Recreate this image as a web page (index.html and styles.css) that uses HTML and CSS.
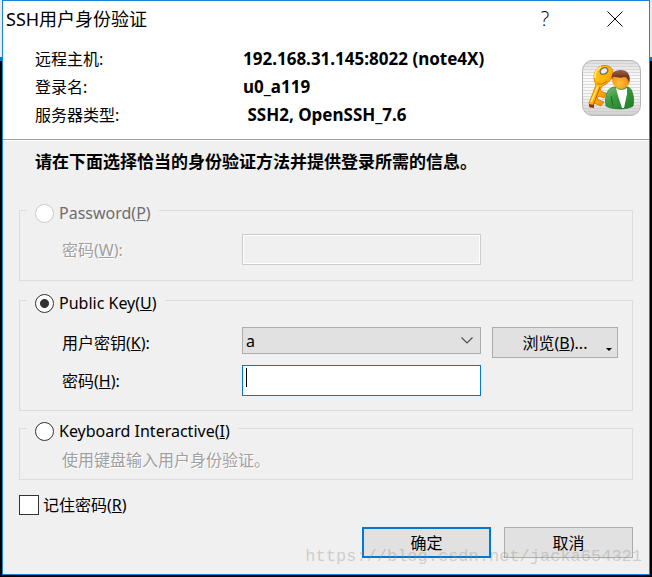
FILE: index.html
```html
<!DOCTYPE html>
<html lang="zh-CN">
<head>
    <meta charset="UTF-8">
    <meta name="viewport" content="width=device-width, initial-scale=1.0">
    <title>SSH用户身份验证</title>
    <link rel="stylesheet" href="styles.css">
</head>
<body>
    <form class="dialog">
        <header class="titlebar">
            <h1>SSH用户身份验证</h1>
            <button type="button" class="title-button help" aria-label="帮助">?</button>
            <button type="button" class="title-button" aria-label="关闭">
                <svg width="16" height="16" viewBox="0 0 16 16"><path d="M.5 .5l15 15M15.5 .5l-15 15" stroke="#000" fill="none"/></svg>
            </button>
        </header>

        <section class="host">
            <dl>
                <dt>远程主机:</dt>
                <dd>192.168.31.145:8022 (note4X)</dd>
                <dt>登录名:</dt>
                <dd>u0_a119</dd>
                <dt>服务器类型:</dt>
                <dd>&nbsp;SSH2, OpenSSH_7.6</dd>
            </dl>
            <svg class="user-icon" width="59" height="57" viewBox="0 0 59 57" aria-hidden="true">
                <defs>
                    <linearGradient id="tile" x1="0" y1="0" x2="0" y2="1">
                        <stop offset="0" stop-color="#dcdcdc"/>
                        <stop offset=".3" stop-color="#fafafa"/>
                        <stop offset=".65" stop-color="#f6f6f6"/>
                        <stop offset="1" stop-color="#cfcfcf"/>
                    </linearGradient>
                    <pattern id="lines" width="3" height="3" patternUnits="userSpaceOnUse">
                        <path d="M0 .5h3" stroke="#c8c8c8" stroke-opacity=".6"/>
                    </pattern>
                    <linearGradient id="gold" x1="0" y1="0" x2="1" y2="1">
                        <stop offset="0" stop-color="#ffd21a"/>
                        <stop offset=".5" stop-color="#ffb400"/>
                        <stop offset="1" stop-color="#e06c00"/>
                    </linearGradient>
                    <radialGradient id="face" cx=".4" cy=".7" r=".7">
                        <stop offset="0" stop-color="#ffc23a"/>
                        <stop offset=".6" stop-color="#f79a1c"/>
                        <stop offset="1" stop-color="#d96a08"/>
                    </radialGradient>
                    <linearGradient id="coat" x1="0" y1="0" x2="1" y2="1">
                        <stop offset="0" stop-color="#7cc47a"/>
                        <stop offset=".4" stop-color="#3c9a40"/>
                        <stop offset="1" stop-color="#1c7a26"/>
                    </linearGradient>
                    <linearGradient id="hair" x1="0" y1="0" x2="0" y2="1">
                        <stop offset="0" stop-color="#a06248"/>
                        <stop offset="1" stop-color="#4c1608"/>
                    </linearGradient>
                </defs>
                <rect x=".5" y=".5" width="58" height="55" rx="10" fill="url(#tile)"/>
                <rect x=".5" y=".5" width="58" height="55" rx="10" fill="url(#lines)" stroke="#b4b4b4"/>
                <path d="M14 25L7 43L8 47H11L12 43L19 46L22 42L15 39L17 36L22 38L24 33L18 31L20 26C26 24 32 18 31 11C29 5 22 4 17 7C11 11 11 19 14 25Z" fill="url(#gold)" stroke="#d87800" stroke-width=".8"/>
                <path d="M16 26L9 42" stroke="#ffe766" stroke-width="1.5" fill="none"/>
                <path d="M18 27L11 46" stroke="#d34c00" stroke-width="1" fill="none"/>
                <path d="M7 44l5 1v3l-5-1z" fill="#9a3208"/>
                <ellipse cx="22" cy="11" rx="4" ry="3" transform="rotate(-30 22 11)" fill="#eee" stroke="#77705e" stroke-width="1.5"/>
                <path d="M13 18C12 12 16 8 19 7" stroke="#fff08a" stroke-width="1.5" fill="none"/>
                <path d="M15 23Q20 26 25 21" stroke="#e08000" stroke-width="1.2" fill="none"/>
                <path d="M24 46C22 35 26 28 32 27H46C50 28 53 38 51 46C46 50 30 50 24 46Z" fill="url(#coat)" stroke="#22772b" stroke-width=".7"/>
                <path d="M34 28Q39 32 45 28L45 34L42 48H40L36 36Z" fill="#fff"/>
                <path d="M29 36L31 46" stroke="#1c6824" fill="none"/>
                <ellipse cx="39" cy="20" rx="9" ry="9" fill="url(#face)"/>
                <path d="M30 20C28 12 34 10 39 10C45 10 49 14 47 22C46 19 45 17 42 17C38 19 33 16 31 17Q30 18 30 20Z" fill="url(#hair)"/>
            </svg>
        </section>

        <main class="content">
            <p class="prompt">请在下面选择恰当的身份验证方法并提供登录所需的信息。</p>

            <fieldset class="method disabled">
                <legend><label><input type="radio" name="method" disabled><span>Password(<u>P</u>)</span></label></legend>
                <div class="fields password-fields">
                    <label class="embossed" for="password">密码(<u>W</u>):</label>
                    <input type="password" class="textbox" id="password" disabled>
                </div>
            </fieldset>

            <fieldset class="method">
                <legend><label><input type="radio" name="method" checked><span>Public Key(<u>U</u>)</span></label></legend>
                <div class="fields key-fields">
                    <label for="userkey">用户密钥(<u>K</u>):</label>
                    <div class="select-wrap">
                        <select id="userkey"><option>a</option></select>
                        <svg width="12" height="7" viewBox="0 0 12 7"><path d="M.5 .5L6 6L11.5 .5" stroke="#505050" stroke-width="1.2" fill="none"/></svg>
                    </div>
                    <button type="button" class="browse">浏览(<u>B</u>)...<span class="arrow"></span></button>
                    <label for="passphrase">密码(<u>H</u>):</label>
                    <div class="active-field">
                        <input type="password" class="textbox" id="passphrase">
                        <span class="caret"></span>
                    </div>
                </div>
            </fieldset>

            <fieldset class="method interactive">
                <legend><label><input type="radio" name="method"><span>Keyboard Interactive(<u>I</u>)</span></label></legend>
                <p class="note embossed">使用键盘输入用户身份验证。</p>
            </fieldset>

            <label class="remember"><input type="checkbox"><span>记住密码(<u>R</u>)</span></label>

            <div class="actions">
                <button type="submit" class="default">确定</button>
                <button type="button">取消</button>
            </div>
        </main>
    </form>
    <div class="watermark">https://blog.csdn.net/jacka654321</div>
</body>
</html>
```

FILE: styles.css
```css
* {
    box-sizing: border-box;
}
body {
    margin: 0;
    padding: 0 2px 2px;
    min-height: 100vh;
    display: flex;
    position: relative;
    background: linear-gradient(#ebebeb 57px, #0078d7 57px, #0078d7 61px, #000 61px);
    font: 16px/24px "Noto Sans", "Noto Sans CJK SC", sans-serif;
    color: #000;
}
input, select, button {
    font: inherit;
    color: inherit;
    margin: 0;
}
.dialog {
    flex: 1;
    display: flex;
    flex-direction: column;
    background: #f0f0f0;
    border: 1px solid #1883d7;
}

/* title bar */
.titlebar {
    display: flex;
    align-items: center;
    height: 36px;
    padding: 0 14px 0 3px;
    background: #fff;
}
.titlebar h1 {
    flex: 1;
    margin: 0;
    font-size: 18px;
    font-weight: normal;
}
.title-button {
    display: flex;
    align-items: center;
    justify-content: center;
    width: 40px;
    height: 30px;
    padding: 0;
    border: 0;
    background: none;
}
.help {
    margin-right: 30px;
    font-family: "Open Sans", sans-serif;
    font-size: 20px;
    font-weight: 300;
}

/* host information */
.host {
    display: flex;
    padding: 8px 8px 10px 32px;
    background: #fff;
    border-bottom: 1px solid #a0a0a0;
    box-shadow: 0 1px #fff;
}
.host dl {
    flex: 1;
    display: grid;
    grid-template-columns: 208px 1fr;
    align-content: start;
    margin: 0;
    line-height: 28px;
}
.host dd {
    margin: 0;
    font-size: 17px;
    font-weight: bold;
}
.user-icon {
    margin-top: 15px;
}

/* authentication methods */
.content {
    flex: 1;
    padding: 10px 16px 16px;
}
.prompt {
    margin: 0 0 21px 16px;
    font-size: 17px;
    font-weight: bold;
}
.method {
    margin: 0;
    padding: 0 14px 0 42px;
    border: 1px solid #dcdcdc;
}
.method + .method {
    margin-top: 4px;
}
.method + .interactive {
    margin-top: 2px;
}
.method legend {
    margin-left: -35px;
    padding: 6px 8px 0;
}
.method legend label {
    display: flex;
    align-items: center;
    gap: 5px;
}
input[type="radio"] {
    appearance: none;
    width: 19px;
    height: 19px;
    border: 1px solid #333;
    border-radius: 50%;
    background: #fff;
}
input[type="radio"]:checked {
    background: radial-gradient(circle, #333 4px, #fff 5px);
}
input[type="radio"]:disabled {
    border-color: #ccc;
}
.disabled {
    color: #6d6d6d;
}
.embossed {
    color: #a0a0a0;
    text-shadow: 1px 1px #fff;
}
.fields {
    display: grid;
    grid-template-columns: 180px 1fr 126px;
    align-items: center;
}
.password-fields {
    padding: 9px 0 15px;
}
.key-fields {
    row-gap: 7px;
    padding: 12px 0 14px;
}
.textbox {
    display: block;
    width: 100%;
    height: 31px;
    padding: 0 4px;
    border: 1px solid #0078d7;
    background: #fff;
    outline: none;
}
.textbox:disabled {
    border-color: #ccc;
    background: #f0f0f0;
    box-shadow: inset 0 0 0 1px #fff;
}
.fields > .textbox, .select-wrap, .active-field {
    width: calc(100% - 11px);
}
.select-wrap, .active-field {
    position: relative;
}
.select-wrap {
    align-self: start;
}
select {
    appearance: none;
    display: block;
    width: 100%;
    height: 27px;
    padding: 0 24px 0 3px;
    border: 1px solid #adadad;
    border-radius: 0;
    background: #e1e1e1;
}
.select-wrap svg {
    position: absolute;
    right: 8px;
    top: 10px;
}
.caret {
    position: absolute;
    left: 4px;
    top: 3px;
    width: 1px;
    height: 19px;
    background: #000;
}
.browse, .actions button {
    height: 31px;
    padding: 0;
    border: 1px solid #adadad;
    background: #e1e1e1;
}
.browse {
    position: relative;
}
.arrow {
    position: absolute;
    right: 5px;
    bottom: 6px;
    border: 3px solid transparent;
    border-top-color: #000;
    border-bottom: 0;
}
.note {
    margin: 0;
    padding: 5px 0 7px;
}

/* bottom of the dialog */
.remember {
    display: flex;
    align-items: center;
    gap: 4px;
    margin: 13px 0 10px;
}
input[type="checkbox"] {
    appearance: none;
    width: 20px;
    height: 20px;
    border: 1px solid #333;
    background: #fff;
}
.actions {
    display: flex;
    justify-content: flex-end;
    gap: 13px;
}
.actions button {
    width: 129px;
}
.actions .default {
    border: 2px solid #0078d7;
}
.watermark {
    position: absolute;
    right: 10px;
    bottom: 8px;
    font-family: "Liberation Mono", monospace;
    font-size: 17px;
    color: rgba(150, 150, 140, 0.4);
    pointer-events: none;
}
```
